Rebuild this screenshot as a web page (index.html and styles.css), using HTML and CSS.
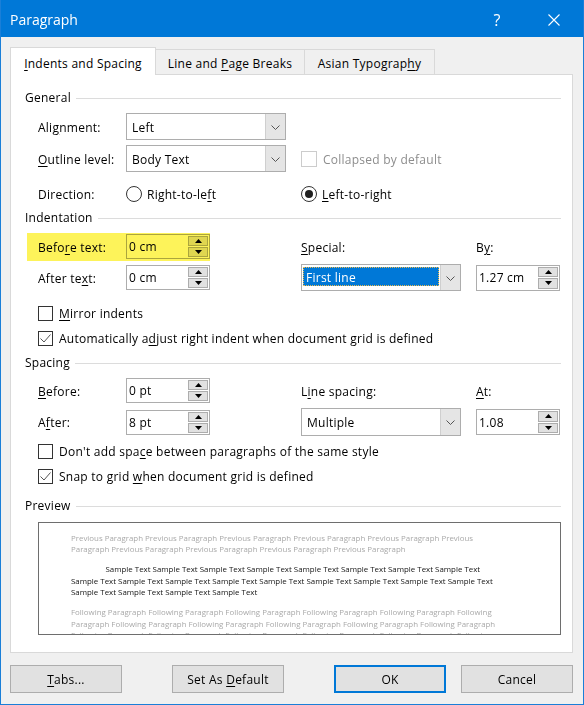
FILE: index.html
```html
<!DOCTYPE html>
<html>
<head>
<meta charset="utf-8">
<link rel="stylesheet" href="styles.css">
</head>
<body>
<div class="window">
  <div class="titlebar">
    <span class="title">Paragraph</span>
    <span class="help">?</span>
    <span class="close"><svg width="12" height="12" viewBox="0 0 12 12"><path d="M0.5 0.5L11.5 11.5M11.5 0.5L0.5 11.5" stroke="#fff" stroke-width="1.1" fill="none"/></svg></span>
  </div>

  <div class="tabs">
    <div class="tab active"><u>I</u>ndents and Spacing</div>
    <div class="tab t2">Line and <u>P</u>age Breaks</div>
    <div class="tab t3">Asian Typograp<u>h</u>y</div>
  </div>

  <div class="panel">
    <div class="group-head m13">General</div>

    <div class="row h27 m7">
      <div class="lbl">Ali<u>g</u>nment:</div>
      <div class="select">
        <span class="sel-text">Left</span>
        <span class="drop"><svg width="9" height="5" viewBox="0 0 9 5"><path d="M0.5 0.5L4.5 4.5L8.5 0.5" stroke="#555" fill="none"/></svg></span>
      </div>
    </div>

    <div class="row h27 m5">
      <div class="lbl"><u>O</u>utline level:</div>
      <div class="select">
        <span class="sel-text">Body Text</span>
        <span class="drop"><svg width="9" height="5" viewBox="0 0 9 5"><path d="M0.5 0.5L4.5 4.5L8.5 0.5" stroke="#555" fill="none"/></svg></span>
      </div>
      <div class="check-item c4 disabled"><span class="box"></span><span class="txt">Collapsed by default</span></div>
    </div>

    <div class="row h22 m11">
      <div class="lbl">Direction:</div>
      <div class="radio-item"><span class="radio"></span><span class="txt">Right-to-le<u>f</u>t</span></div>
      <div class="radio-item c4"><span class="radio on"></span><span class="txt"><u>L</u>eft-to-right</span></div>
    </div>

    <div class="group-head m3">Indentation</div>

    <div class="row h28 m7 rel">
      <div class="lbl">Befo<u>r</u>e text:</div>
      <div class="spin top1">
        <span class="spin-text">0 cm</span>
        <span class="spin-btns">
          <span class="sb"><svg width="7" height="4" viewBox="0 0 7 4"><polygon points="0,4 3.5,0 7,4" fill="#000"/></svg></span>
          <span class="sb"><svg width="7" height="4" viewBox="0 0 7 4"><polygon points="0,0 7,0 3.5,4" fill="#000"/></svg></span>
        </span>
      </div>
      <div class="lbl c4"><u>S</u>pecial:</div>
      <div class="lbl c6">B<u>y</u>:</div>
      <div class="hl"></div>
    </div>

    <div class="row h27 m3">
      <div class="lbl">After te<u>x</u>t:</div>
      <div class="spin">
        <span class="spin-text">0 cm</span>
        <span class="spin-btns">
          <span class="sb"><svg width="7" height="4" viewBox="0 0 7 4"><polygon points="0,4 3.5,0 7,4" fill="#000"/></svg></span>
          <span class="sb"><svg width="7" height="4" viewBox="0 0 7 4"><polygon points="0,0 7,0 3.5,4" fill="#000"/></svg></span>
        </span>
      </div>
      <div class="select c4">
        <span class="sel-focus">First line</span>
        <span class="drop"><svg width="9" height="5" viewBox="0 0 9 5"><path d="M0.5 0.5L4.5 4.5L8.5 0.5" stroke="#555" fill="none"/></svg></span>
      </div>
      <div class="spin c6 tall">
        <span class="spin-text">1.27 cm</span>
        <span class="spin-btns">
          <span class="sb"><svg width="7" height="4" viewBox="0 0 7 4"><polygon points="0,4 3.5,0 7,4" fill="#000"/></svg></span>
          <span class="sb"><svg width="7" height="4" viewBox="0 0 7 4"><polygon points="0,0 7,0 3.5,4" fill="#000"/></svg></span>
        </span>
      </div>
    </div>

    <div class="check-row m10"><span class="box"></span><span><u>M</u>irror indents</span></div>
    <div class="check-row"><span class="box"><svg width="13" height="13" viewBox="0 0 13 13"><path d="M1.5 6.5L5 10L11.5 2.5" stroke="#555" stroke-width="1" fill="none"/></svg></span><span>Automatically a<u>d</u>just right indent when document grid is defined</span></div>

    <div class="group-head m2">Spacing</div>

    <div class="row h28 m6">
      <div class="lbl"><u>B</u>efore:</div>
      <div class="spin top1">
        <span class="spin-text">0 pt</span>
        <span class="spin-btns">
          <span class="sb"><svg width="7" height="4" viewBox="0 0 7 4"><polygon points="0,4 3.5,0 7,4" fill="#000"/></svg></span>
          <span class="sb"><svg width="7" height="4" viewBox="0 0 7 4"><polygon points="0,0 7,0 3.5,4" fill="#000"/></svg></span>
        </span>
      </div>
      <div class="lbl c4">L<u>i</u>ne spacing:</div>
      <div class="lbl c6"><u>A</u>t:</div>
    </div>

    <div class="row h28 m3">
      <div class="lbl">A<u>f</u>ter:</div>
      <div class="spin">
        <span class="spin-text">8 pt</span>
        <span class="spin-btns">
          <span class="sb"><svg width="7" height="4" viewBox="0 0 7 4"><polygon points="0,4 3.5,0 7,4" fill="#000"/></svg></span>
          <span class="sb"><svg width="7" height="4" viewBox="0 0 7 4"><polygon points="0,0 7,0 3.5,4" fill="#000"/></svg></span>
        </span>
      </div>
      <div class="select c4 s28">
        <span class="sel-text">Multiple</span>
        <span class="drop"><svg width="9" height="5" viewBox="0 0 9 5"><path d="M0.5 0.5L4.5 4.5L8.5 0.5" stroke="#555" fill="none"/></svg></span>
      </div>
      <div class="spin c6 tall">
        <span class="spin-text">1.08</span>
        <span class="spin-btns">
          <span class="sb"><svg width="7" height="4" viewBox="0 0 7 4"><polygon points="0,4 3.5,0 7,4" fill="#000"/></svg></span>
          <span class="sb"><svg width="7" height="4" viewBox="0 0 7 4"><polygon points="0,0 7,0 3.5,4" fill="#000"/></svg></span>
        </span>
      </div>
    </div>

    <div class="check-row m3"><span class="box"></span><span>Don't add spa<u>c</u>e between paragraphs of the same style</span></div>
    <div class="check-row"><span class="box"><svg width="13" height="13" viewBox="0 0 13 13"><path d="M1.5 6.5L5 10L11.5 2.5" stroke="#555" stroke-width="1" fill="none"/></svg></span><span>Snap to grid <u>w</u>hen document grid is defined</span></div>

    <div class="group-head m7">Preview</div>

    <div class="preview">
      <div class="para prev">
        <div>Previous Paragraph Previous Paragraph Previous Paragraph Previous Paragraph Previous Paragraph Previous</div>
        <div>Paragraph Previous Paragraph Previous Paragraph Previous Paragraph Previous Paragraph</div>
      </div>
      <div class="para sample">
        <div class="first">Sample Text Sample Text Sample Text Sample Text Sample Text Sample Text Sample Text Sample Text</div>
        <div>Sample Text Sample Text Sample Text Sample Text Sample Text Sample Text Sample Text Sample Text Sample Text</div>
        <div>Sample Text Sample Text Sample Text Sample Text</div>
      </div>
      <div class="para prev">
        <div>Following Paragraph Following Paragraph Following Paragraph Following Paragraph Following Paragraph Following</div>
        <div>Paragraph Following Paragraph Following Paragraph Following Paragraph Following Paragraph Following Paragraph</div>
        <div>Following Paragraph Following Paragraph Following Paragraph Following Paragraph Following Paragraph Following</div>
      </div>
    </div>
  </div>

  <div class="buttons">
    <div class="btn"><span><u>T</u>abs...</span></div>
    <div class="btn g50"><span>Set As <u>D</u>efault</span></div>
    <div class="btn g50 default"><span>OK</span></div>
    <div class="btn g15"><span>Cancel</span></div>
  </div>
</div>
</body>
</html>
```

FILE: styles.css
```css
* { box-sizing: border-box; }

html, body {
  margin: 0;
  padding: 0;
}

body {
  width: 584px;
  height: 705px;
  overflow: hidden;
  font-family: "Open Sans", "Noto Sans", sans-serif;
  font-size: 12px;
  line-height: 16px;
  letter-spacing: 0.25px;
  color: #000;
  background: #f0f0f0;
}

u { text-decoration: underline; text-underline-offset: 2px; text-decoration-thickness: 1px; }

.window {
  width: 584px;
  height: 705px;
  border: 1px solid #1a7fd8;
  border-top: 0;
  background: #f0f0f0;
}

.titlebar {
  height: 37px;
  background: #0078d7;
  color: #fff;
  display: flex;
  align-items: center;
  padding-top: 3px;
  padding-right: 6px;
  letter-spacing: 0;
}

.title {
  padding-left: 9px;
  font-size: 14px;
  line-height: 18px;
}

.help {
  margin-left: auto;
  width: 46px;
  text-align: center;
  font-size: 16px;
  line-height: 18px;
}

.close {
  width: 46px;
  margin-left: 11px;
  display: flex;
  justify-content: center;
  align-items: center;
  height: 18px;
}

/* tabs */
.tabs {
  display: flex;
  align-items: flex-end;
  height: 27px;
  margin-top: 10px;
  padding-left: 9px;
  position: relative;
  z-index: 1;
}

.tab {
  height: 25px;
  border: 1px solid #d9d9d9;
  border-left: 0;
  border-bottom: 0;
  text-align: center;
  padding-top: 6px;
  line-height: 16px;
  white-space: nowrap;
  background: #f0f0f0;
}

.tab.active {
  width: 146px;
  height: 28px;
  margin-bottom: -1px;
  border-left: 1px solid #d9d9d9;
  background: #fff;
  padding-top: 8px;
}

.tab.t2 { width: 149px; }
.tab.t3 { width: 130px; }

/* panel */
.panel {
  margin-left: 9px;
  width: 563px;
  height: 579px;
  border: 1px solid #d9d9d9;
  background: #fff;
  padding: 0 11px 0 14px;
}

.group-head {
  display: flex;
  align-items: center;
  gap: 5px;
  height: 18px;
  line-height: 16px;
  padding-top: 2px;
}

.group-head::after {
  content: "";
  flex: 1;
  height: 1px;
  background: #dcdcdc;
}

.m2 { margin-top: 2px; }
.m3 { margin-top: 3px; }
.m5 { margin-top: 5px; }
.m6 { margin-top: 6px; }
.m7 { margin-top: 7px; }
.m10 { margin-top: 10px; }
.m11 { margin-top: 11px; }
.m13 { margin-top: 13px; }

.row {
  margin-left: 13px;
  display: grid;
  grid-template-columns: 88px 160px 15px 160px 15px 84px;
  align-items: center;
}

.rel { position: relative; }
.h22 { height: 22px; }
.h27 { height: 27px; }
.h28 { height: 28px; }

.lbl { white-space: nowrap; padding-top: 2px; }
.c4 { grid-column: 4; }
.c6 { grid-column: 6; }

.txt { padding-top: 2px; }

/* select */
.select {
  height: 27px;
  width: 160px;
  border: 1px solid #adadad;
  background: #fff;
  display: flex;
  align-items: stretch;
}

.select.s28 { height: 28px; }

.sel-text {
  flex: 1;
  padding-left: 5px;
  padding-top: 2px;
  display: flex;
  align-items: center;
}

.sel-focus {
  flex: 1;
  margin: 2px 1px 4px 1px;
  background: #0078d7;
  color: #fff;
  padding-left: 3px;
  padding-top: 2px;
  display: flex;
  align-items: center;
  outline: 1px dotted #e9b94f;
  outline-offset: -1px;
}

.drop {
  width: 20px;
  background: #e5e5e5;
  border-left: 1px solid #cfcfcf;
  display: flex;
  align-items: center;
  justify-content: center;
  padding-top: 1px;
}

/* spin */
.spin {
  width: 84px;
  height: 25px;
  border: 1px solid #adadad;
  background: #fff;
  display: flex;
}

.spin.top1 { align-self: start; margin-top: 1px; }
.spin.tall { height: 26px; }

.spin-text {
  flex: 1;
  padding-left: 2px;
  padding-top: 1px;
  display: flex;
  align-items: center;
}

.spin-btns {
  width: 21px;
  padding: 1px 1px 1px 0;
  display: flex;
  flex-direction: column;
  gap: 1px;
}

.sb {
  flex: 1;
  background: #e1e1e1;
  border: 1px solid #adadad;
  display: flex;
  align-items: center;
  justify-content: center;
}

/* highlight over "Before text" */
.hl {
  position: absolute;
  left: -11px;
  top: 0;
  width: 183px;
  height: 28px;
  background: #fdf35a;
  mix-blend-mode: multiply;
  pointer-events: none;
}

/* radio */
.radio-item {
  display: flex;
  align-items: center;
  gap: 5px;
  white-space: nowrap;
}

.radio {
  width: 16px;
  height: 16px;
  border: 1px solid #333;
  border-radius: 50%;
  background: #fff;
  display: flex;
  align-items: center;
  justify-content: center;
}

.radio.on::after {
  content: "";
  width: 8px;
  height: 8px;
  border-radius: 50%;
  background: #1f1f1f;
}

/* checkboxes */
.check-row {
  margin-left: 13px;
  height: 25px;
  display: flex;
  align-items: center;
  gap: 6px;
  white-space: nowrap;
}

.check-item {
  display: flex;
  align-items: center;
  gap: 6px;
  white-space: nowrap;
}

.box {
  width: 15px;
  height: 15px;
  border: 1px solid #333;
  background: #fff;
  display: flex;
  align-items: center;
  justify-content: center;
  flex: none;
}

.disabled { color: #8d8d8d; }
.disabled .box { border-color: #cccccc; width: 16px; height: 16px; }

/* preview */
.preview {
  margin-top: 8px;
  margin-left: 13px;
  height: 113px;
  border: 1px solid #6e6e6e;
  background: #fff;
  overflow: hidden;
  padding: 9.5px 0 0 32px;
  font-size: 7.9px;
  line-height: 11.5px;
  letter-spacing: 0;
  white-space: nowrap;
}

.para { margin-bottom: 8.5px; }
.para.prev { color: #a9a9a9; }
.para.sample { color: #151515; }
.para .first { padding-left: 34.5px; }

/* bottom buttons */
.buttons {
  display: flex;
  margin-top: 12px;
  margin-left: 9px;
}

.btn {
  width: 112px;
  height: 28px;
  background: #e1e1e1;
  border: 1px solid #adadad;
  display: flex;
  align-items: center;
  justify-content: center;
  padding-top: 2px;
}

.btn.default { border: 2px solid #0078d7; }
.g50 { margin-left: 50px; }
.g15 { margin-left: 15px; }
```
